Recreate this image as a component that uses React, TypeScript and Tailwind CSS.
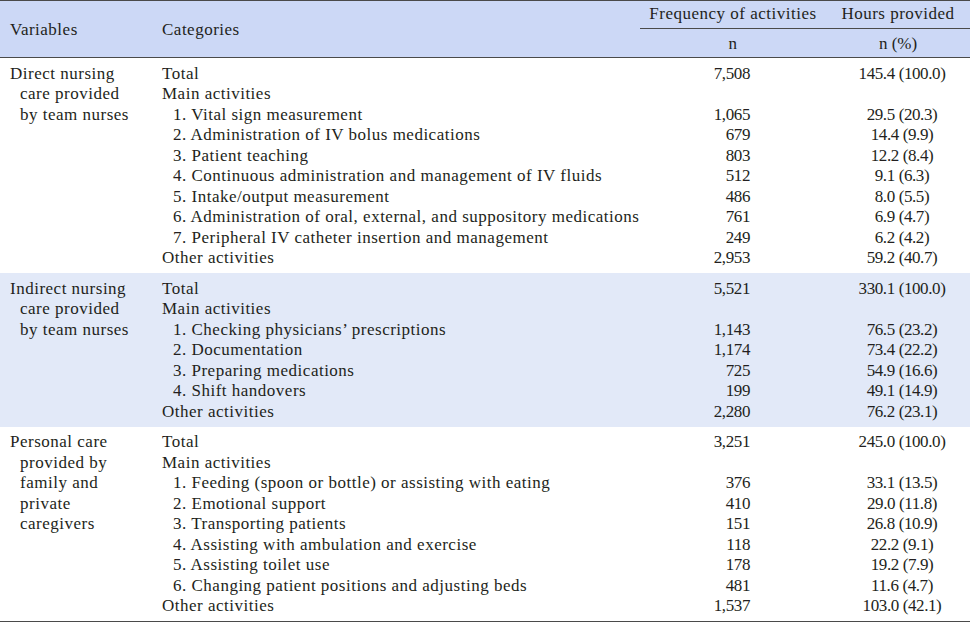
import React from "react";

type Row = { label: string; indent?: boolean; n: string; h: string };
type Group = { vars: string[]; bg: string; rows: Row[] };

const groups: Group[] = [
  {
    vars: ["Direct nursing", "care provided", "by team nurses"],
    bg: "bg-white",
    rows: [
      { label: "Total", n: "7,508", h: "145.4 (100.0)" },
      { label: "Main activities", n: "", h: "" },
      { label: "1. Vital sign measurement", indent: true, n: "1,065", h: "29.5 (20.3)" },
      { label: "2. Administration of IV bolus medications", indent: true, n: "679", h: "14.4 (9.9)" },
      { label: "3. Patient teaching", indent: true, n: "803", h: "12.2 (8.4)" },
      { label: "4. Continuous administration and management of IV fluids", indent: true, n: "512", h: "9.1 (6.3)" },
      { label: "5. Intake/output measurement", indent: true, n: "486", h: "8.0 (5.5)" },
      { label: "6. Administration of oral, external, and suppository medications", indent: true, n: "761", h: "6.9 (4.7)" },
      { label: "7. Peripheral IV catheter insertion and management", indent: true, n: "249", h: "6.2 (4.2)" },
      { label: "Other activities", n: "2,953", h: "59.2 (40.7)" },
    ],
  },
  {
    vars: ["Indirect nursing", "care provided", "by team nurses"],
    bg: "bg-[#e2e9f8]",
    rows: [
      { label: "Total", n: "5,521", h: "330.1 (100.0)" },
      { label: "Main activities", n: "", h: "" },
      { label: "1. Checking physicians\u2019 prescriptions", indent: true, n: "1,143", h: "76.5 (23.2)" },
      { label: "2. Documentation", indent: true, n: "1,174", h: "73.4 (22.2)" },
      { label: "3. Preparing medications", indent: true, n: "725", h: "54.9 (16.6)" },
      { label: "4. Shift handovers", indent: true, n: "199", h: "49.1 (14.9)" },
      { label: "Other activities", n: "2,280", h: "76.2 (23.1)" },
    ],
  },
  {
    vars: ["Personal care", "provided by", "family and", "private", "caregivers"],
    bg: "bg-white",
    rows: [
      { label: "Total", n: "3,251", h: "245.0 (100.0)" },
      { label: "Main activities", n: "", h: "" },
      { label: "1. Feeding (spoon or bottle) or assisting with eating", indent: true, n: "376", h: "33.1 (13.5)" },
      { label: "2. Emotional support", indent: true, n: "410", h: "29.0 (11.8)" },
      { label: "3. Transporting patients", indent: true, n: "151", h: "26.8 (10.9)" },
      { label: "4. Assisting with ambulation and exercise", indent: true, n: "118", h: "22.2 (9.1)" },
      { label: "5. Assisting toilet use", indent: true, n: "178", h: "19.2 (7.9)" },
      { label: "6. Changing patient positions and adjusting beds", indent: true, n: "481", h: "11.6 (4.7)" },
      { label: "Other activities", n: "1,537", h: "103.0 (42.1)" },
    ],
  },
];

export default function App() {
  return (
    <div
      className="w-[970px] h-[623px] bg-white text-[#231f20] text-[17px] tracking-[0.5px] leading-[20.5px] overflow-hidden"
      style={{ fontFamily: '"Liberation Serif", "Times New Roman", serif' }}
    >
      <div className="border-t-[1.5px] border-b-[1.5px] border-[#4a4a4a] bg-[#ccd8f6] flex h-[58px]">
        <div className="w-[162px] pl-[10px] flex items-center pt-[2px]">Variables</div>
        <div className="w-[478px] flex items-center pt-[2px]">Categories</div>
        <div className="flex-1 flex flex-col">
          <div className="flex h-[28px] items-center border-b-[1.5px] border-[#4a4a4a]">
            <div className="w-[186px] text-center">Frequency of activities</div>
            <div className="w-[144px] text-center">Hours provided</div>
          </div>
          <div className="flex flex-1 items-center pt-[2px]">
            <div className="w-[186px] text-center">n</div>
            <div className="w-[144px] text-center tracking-normal">n (%)</div>
          </div>
        </div>
      </div>
      {groups.map((g, gi) => (
        <div key={gi} className={`flex pt-[5.5px] pb-[4.5px] ${g.bg}`}>
          <div className="w-[162px] pl-[10px]">
            {g.vars.map((v, vi) => (
              <div key={vi} className={vi === 0 ? "whitespace-nowrap" : "pl-[10px] whitespace-nowrap"}>
                {v}
              </div>
            ))}
          </div>
          <div className="flex-1">
            {g.rows.map((r, ri) => (
              <div key={ri} className="grid grid-cols-[478px_186px_144px]">
                <div className={r.indent ? "pl-[11px] whitespace-nowrap" : "whitespace-nowrap"}>{r.label}</div>
                <div className="text-right pr-[76px] tracking-[-0.4px]">{r.n}</div>
                <div className="text-center pl-[8px] whitespace-nowrap tracking-[-0.4px]">{r.h}</div>
              </div>
            ))}
          </div>
        </div>
      ))}
      <div className="border-t-[1.5px] border-[#4a4a4a]" />
    </div>
  );
}
